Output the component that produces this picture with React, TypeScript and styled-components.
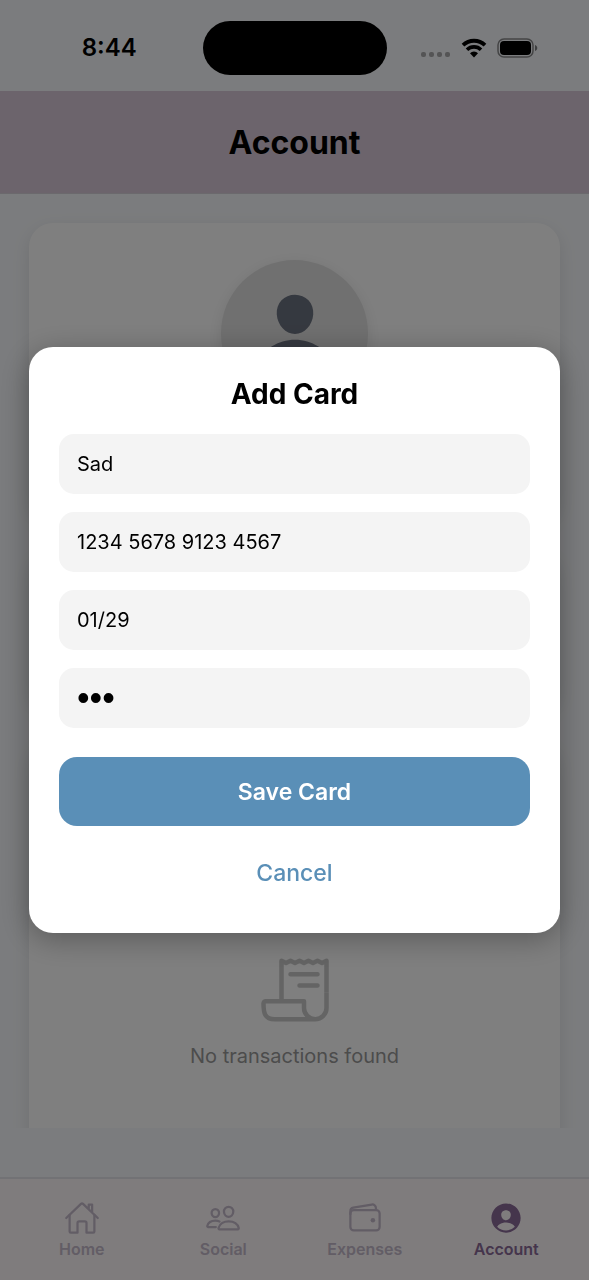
import React from "react";
import styled, { createGlobalStyle } from "styled-components";
import {
  IoHomeOutline,
  IoPeopleOutline,
  IoPerson,
  IoPersonCircle,
  IoReceiptOutline,
  IoWalletOutline,
} from "react-icons/io5";

const GlobalStyle = createGlobalStyle`
  *, *::before, *::after { box-sizing: border-box; }
  body {
    margin: 0;
    font-family: Inter, "Liberation Sans", sans-serif;
    color: #000;
  }
  button, input { font: inherit; }
`;

const Screen = styled.div`
  height: 100vh;
  display: flex;
  flex-direction: column;
  background: #f7f9fc;
`;

const StatusBar = styled.div`
  flex: none;
  display: grid;
  grid-template-columns: 1fr 184px 1fr;
  align-items: center;
  height: 91px;
  padding-top: 4px;
`;

const Clock = styled.time`
  justify-self: center;
  padding-left: 16px;
  font-size: 24px;
  line-height: 32px;
  font-weight: 600;
`;

const Island = styled.div`
  height: 54px;
  border-radius: 27px;
  background: #000;
`;

const Signals = styled.div`
  justify-self: center;
  display: flex;
  align-items: center;
  gap: 10px;
  padding-right: 16px;
`;

const Header = styled.header`
  flex: none;
  display: flex;
  align-items: center;
  justify-content: center;
  height: 103px;
  padding-top: 2px;
  background: #d8c8d8;
  border-bottom: 1px solid #d6d2da;
`;

const PageTitle = styled.h1`
  margin: 0;
  font-size: 32px;
  line-height: 40px;
  font-weight: 700;
`;

const Content = styled.main`
  flex: 1;
  min-height: 0;
  overflow: hidden;
  display: flex;
  flex-direction: column;
  gap: 30px;
  padding: 29px 29px 0;
  margin-bottom: 49px;
`;

const Card = styled.section<{ $height: number }>`
  flex: none;
  display: flex;
  flex-direction: column;
  align-items: center;
  min-height: ${(p) => p.$height}px;
  padding: 37px 30px;
  border-radius: 24px;
  background: #fff;
  box-shadow: 0 6px 18px rgba(0, 0, 0, 0.1);
`;

const Avatar = styled.div`
  display: flex;
  align-items: center;
  justify-content: center;
  width: 147px;
  height: 147px;
  border-radius: 50%;
  background: #e0e0e0;
  color: #6b7280;
  box-shadow: 0 4px 16px rgba(0, 0, 0, 0.1);
`;

const EmptyState = styled.div`
  display: flex;
  flex-direction: column;
  align-items: center;
  gap: 16px;
  margin-top: 177px;
  color: #c8c8c8;
`;

const EmptyText = styled.p`
  margin: 0;
  font-size: 20px;
  line-height: 28px;
  color: #999;
`;

const TabBar = styled.nav`
  flex: none;
  display: grid;
  grid-template-columns: repeat(4, 1fr);
  height: 103px;
  padding: 21px 12px 0 11px;
  border-top: 2px solid #e4e4ea;
  background: #fff8fb;
`;

const Tab = styled.a<{ $active?: boolean }>`
  display: flex;
  flex-direction: column;
  align-items: center;
  gap: 3px;
  font-size: 16px;
  line-height: 20px;
  font-weight: 600;
  text-decoration: none;
  color: ${(p) => (p.$active ? "#8a6a98" : "#c5bacb")};
`;

const Overlay = styled.div`
  position: fixed;
  inset: 0;
  display: flex;
  align-items: center;
  justify-content: center;
  padding: 0 29px;
  background: rgba(0, 0, 0, 0.5);
`;

const Dialog = styled.form`
  flex: 1;
  display: flex;
  flex-direction: column;
  padding: 30px;
  border-radius: 24px;
  background: #fff;
  box-shadow: 0 6px 30px rgba(0, 0, 0, 0.3);
`;

const DialogTitle = styled.h2`
  margin: 0 0 23px;
  font-size: 28px;
  line-height: 34px;
  font-weight: 700;
  text-align: center;
`;

const Fields = styled.div`
  display: flex;
  flex-direction: column;
  gap: 18px;
  margin-bottom: 29px;
`;

const Field = styled.input`
  width: 100%;
  height: 60px;
  padding: 0 18px;
  border: 0;
  border-radius: 15px;
  outline: none;
  background: #f4f4f4;
  color: #000;
  font-size: 20px;

  &[type="password"] {
    font-family: "Liberation Sans", sans-serif;
    font-size: 36px;
  }
`;

const SaveButton = styled.button`
  height: 69px;
  margin-bottom: 16px;
  padding: 0;
  border: 0;
  border-radius: 18px;
  background: #5a8fb7;
  color: #fff;
  font-size: 23px;
  font-weight: 600;
`;

const CancelButton = styled.button`
  height: 61px;
  padding: 0;
  border: 0;
  background: none;
  color: #5a8fb7;
  font-size: 23px;
  font-weight: 500;
`;

const SignalDots = () => (
  <svg width="30" height="18" viewBox="0 0 30 18" fill="#a8a8aa" aria-hidden="true">
    {[0, 8, 16, 24].map((x) => (
      <rect key={x} x={x} y="13" width="5" height="5" rx="2" />
    ))}
  </svg>
);

const Wifi = () => (
  <svg width="26" height="20" viewBox="0 0 26 20" fill="none" stroke="#000" aria-hidden="true">
    <path d="M2 7.2a15.8 15.8 0 0 1 22 0" strokeWidth="3.8" />
    <path d="M6 11.700a10 10 0 0 1 14 0" strokeWidth="3.6" />
    <path d="M13 19.500l-4-4.200a5.600 5.600 0 0 1 8 0z" fill="#000" stroke="none" />
  </svg>
);

const Battery = () => (
  <svg width="41" height="20" viewBox="0 0 41 20" aria-hidden="true">
    <rect x="1" y="1" width="35" height="18" rx="6" fill="none" stroke="#000" strokeOpacity="0.45" strokeWidth="1.5" />
    <rect x="3" y="3" width="31" height="14" rx="4" fill="#000" />
    <path d="M38 7c3 .8 3 5.200 0 6z" fill="#000" fillOpacity="0.5" />
  </svg>
);

const tabs = [
  { label: "Home", Icon: IoHomeOutline },
  { label: "Social", Icon: IoPeopleOutline },
  { label: "Expenses", Icon: IoWalletOutline },
  { label: "Account", Icon: IoPersonCircle, active: true },
];

const fields = [
  { label: "Name on card", value: "Sad", type: "text" },
  { label: "Card number", value: "1234 5678 9123 4567", type: "text" },
  { label: "Expiry date", value: "01/29", type: "text" },
  { label: "CVV", value: "123", type: "password" },
];

export default function App() {
  return (
    <>
      <GlobalStyle />
      <Screen>
        <StatusBar>
          <Clock>8:44</Clock>
          <Island />
          <Signals>
            <SignalDots />
            <Wifi />
            <Battery />
          </Signals>
        </StatusBar>
        <Header>
          <PageTitle>Account</PageTitle>
        </Header>
        <Content>
          <Card $height={297}>
            <Avatar>
              <IoPerson size={90} />
            </Avatar>
          </Card>
          <Card $height={160} />
          <Card $height={420}>
            <EmptyState>
              <IoReceiptOutline size={72} />
              <EmptyText>No transactions found</EmptyText>
            </EmptyState>
          </Card>
        </Content>
        <TabBar>
          {tabs.map(({ label, Icon, active }) => (
            <Tab key={label} href={`#${label.toLowerCase()}`} $active={active}>
              <Icon size={36} />
              {label}
            </Tab>
          ))}
        </TabBar>
      </Screen>
      <Overlay>
        <Dialog role="dialog" aria-modal="true" aria-labelledby="add-card" onSubmit={(e) => e.preventDefault()}>
          <DialogTitle id="add-card">Add Card</DialogTitle>
          <Fields>
            {fields.map(({ label, value, type }) => (
              <Field key={label} aria-label={label} type={type} defaultValue={value} />
            ))}
          </Fields>
          <SaveButton type="submit">Save Card</SaveButton>
          <CancelButton type="button">Cancel</CancelButton>
        </Dialog>
      </Overlay>
    </>
  );
}
